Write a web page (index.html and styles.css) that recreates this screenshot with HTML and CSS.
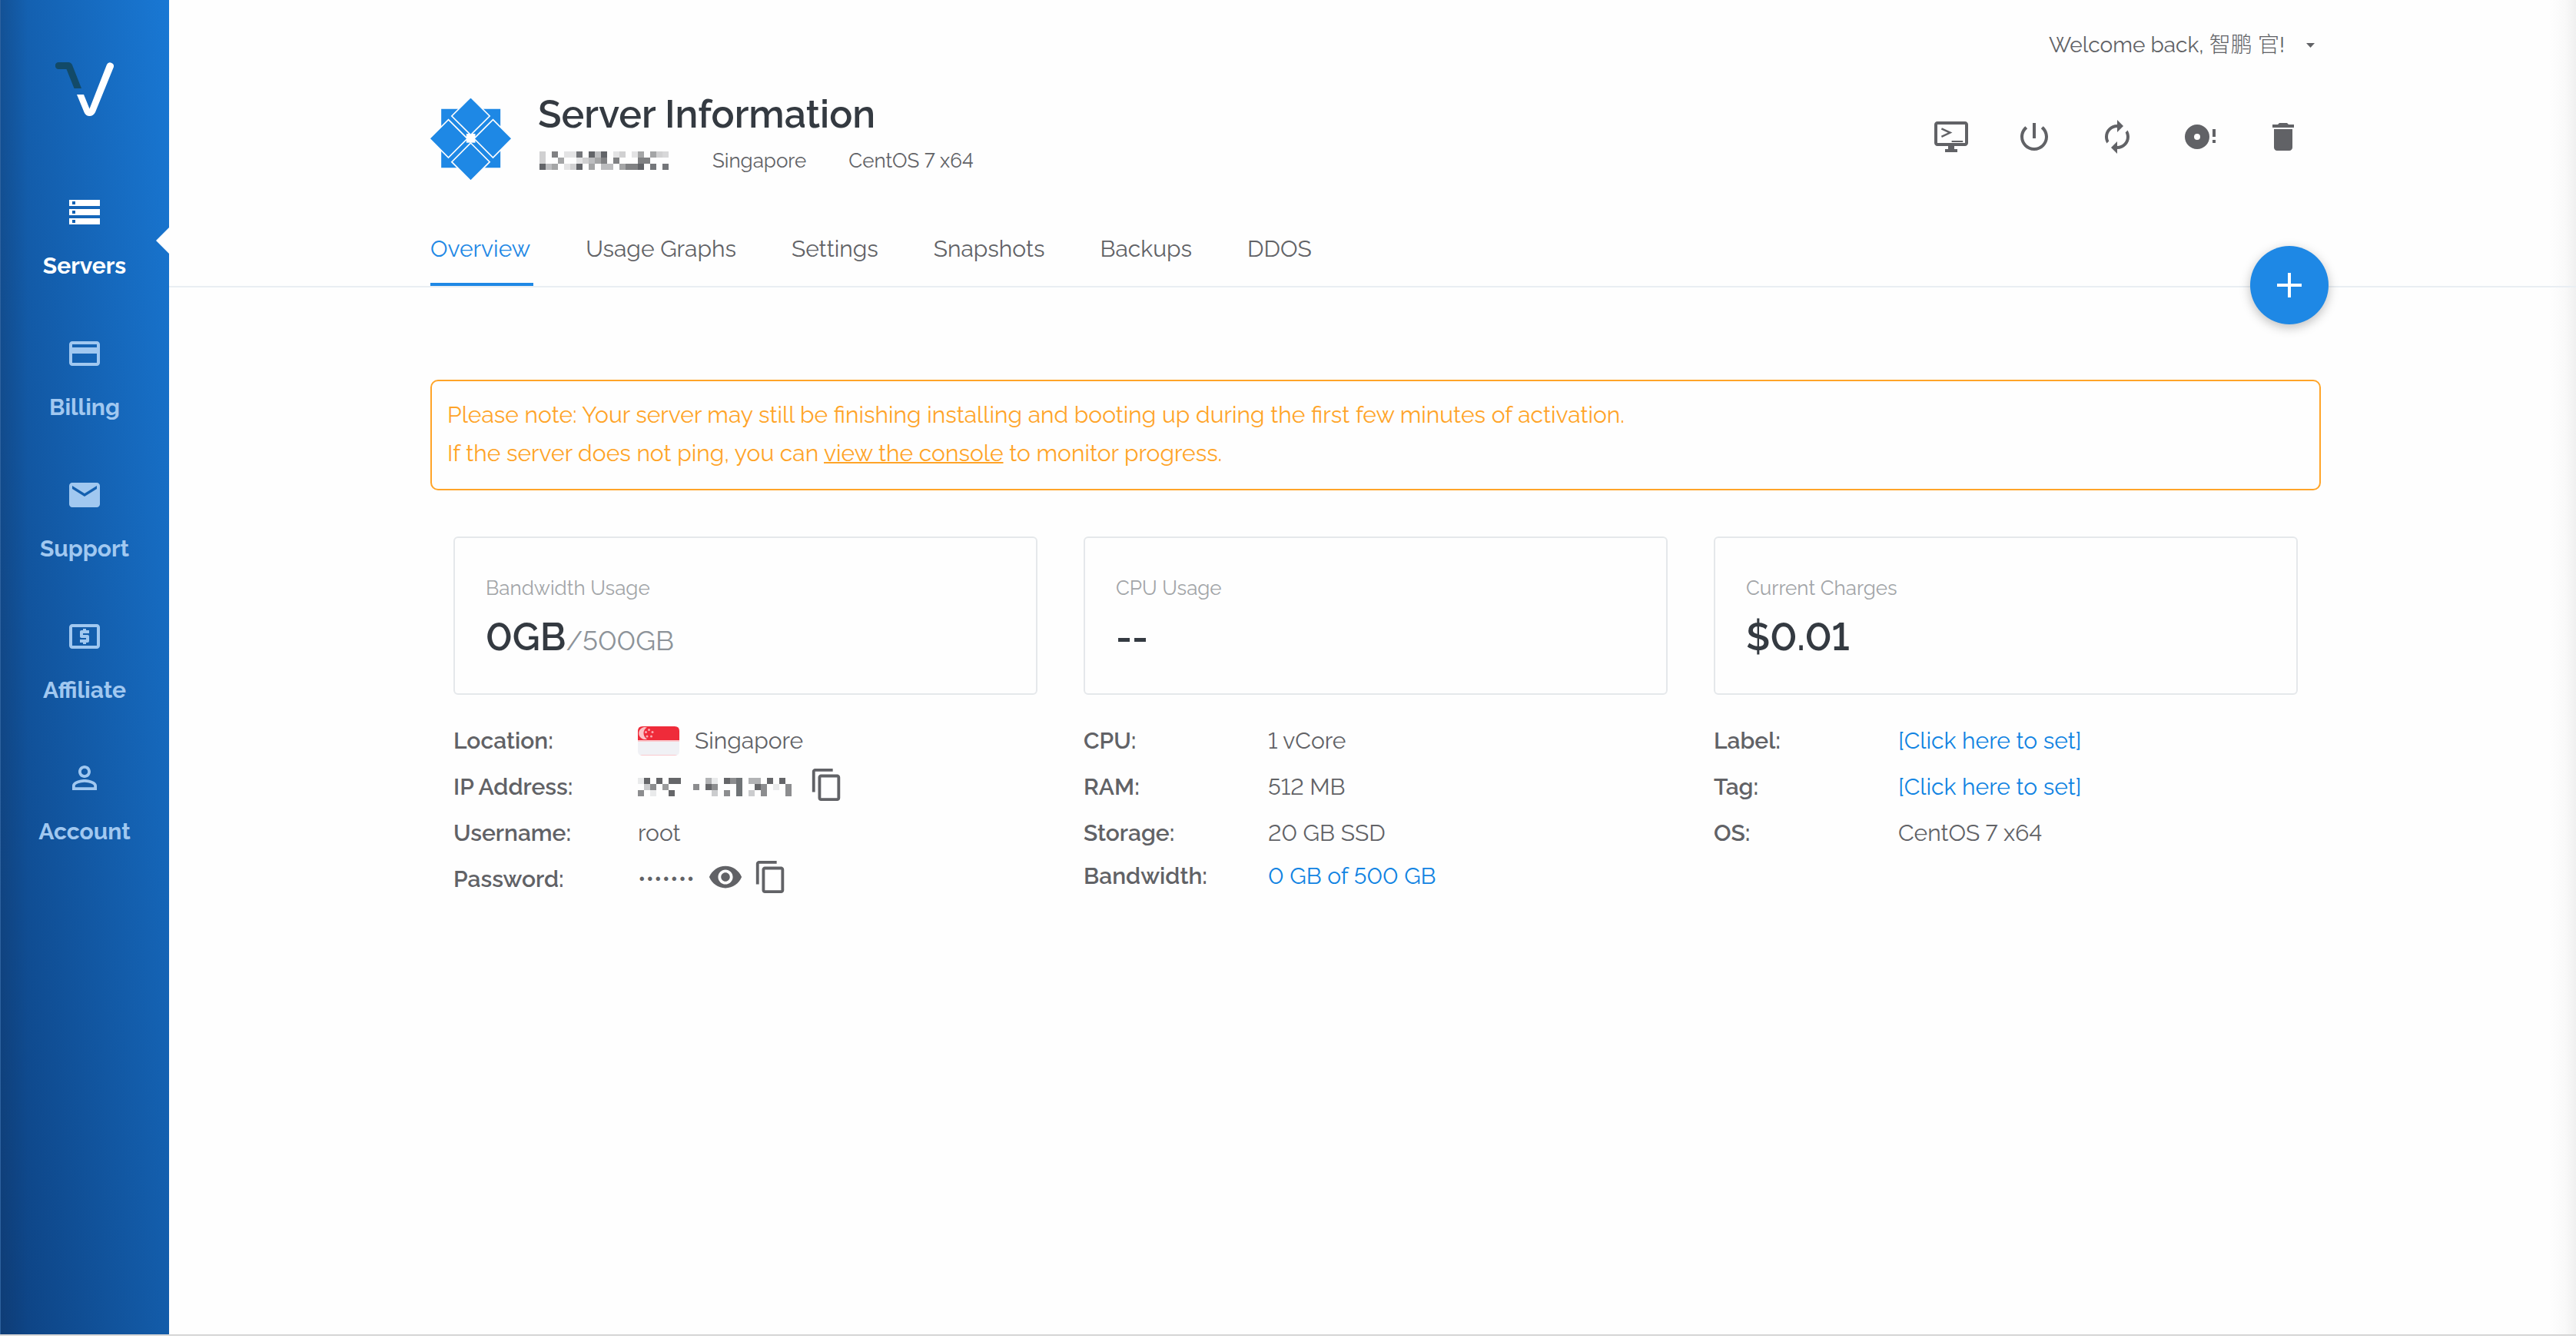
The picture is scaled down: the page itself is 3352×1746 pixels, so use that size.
FILE: index.html
```html
<!DOCTYPE html>
<html lang="en">
<head>
<meta charset="utf-8">
<meta name="viewport" content="width=device-width, initial-scale=1">
<title>Server Information</title>
<link rel="stylesheet" href="styles.css">
</head>
<body>
<div class="shell">
  <aside class="sidebar">
    <a class="brand" href="#" aria-label="Home">
      <svg width="76" height="70" viewBox="0 0 76 70" aria-hidden="true">
        <path fill="#124a68" d="M4.3 0H17Q20.500 0 22 3.500L34 34H24.500L14.500 9H4.300A4.500 4.500 0 0 1 4.300 0Z"/>
        <path fill="#fff" d="M28 42H37L44.500 60.500L67 3A4.800 4.800 0 0 1 76 6L52 65Q49.500 70 44.500 70Q39.500 70 37.500 65Z"/>
      </svg>
    </a>
    <nav class="nav" aria-label="Main">
      <a class="nav-item nav-item-active" href="#" aria-current="page">
        <svg class="icon" viewBox="0 0 24 24" aria-hidden="true"><path d="M2 20h20v-4H2v4zm2-3h2v2H4v-2zM2 4v4h20V4H2zm4 3H4V5h2v2zm-4 7h20v-4H2v4zm2-3h2v2H4v-2z"/></svg>
        <span>Servers</span>
      </a>
      <a class="nav-item" href="#">
        <svg class="icon" viewBox="0 0 24 24" aria-hidden="true"><path d="M20 4H4c-1.110 0-1.990.89-1.990 2L2 18c0 1.110.89 2 2 2h16c1.110 0 2-.89 2-2V6c0-1.110-.89-2-2-2zm0 14H4v-6h16v6zm0-10H4V6h16v2z"/></svg>
        <span>Billing</span>
      </a>
      <a class="nav-item" href="#">
        <svg class="icon" viewBox="0 0 24 24" aria-hidden="true"><path d="M20 4H4c-1.100 0-1.990.9-1.990 2L2 18c0 1.100.9 2 2 2h16c1.100 0 2-.9 2-2V6c0-1.100-.9-2-2-2zm0 4l-8 5-8-5V6l8 5 8-5v2z"/></svg>
        <span>Support</span>
      </a>
      <a class="nav-item" href="#">
        <svg class="icon" viewBox="0 0 24 24" aria-hidden="true"><path d="M11 17h2v-1h1c.55 0 1-.45 1-1v-3c0-.55-.45-1-1-1h-3v-1h4V8h-2V7h-2v1h-1c-.55 0-1 .45-1 1v3c0 .55.45 1 1 1h3v1H9v2h2v1zm9-13H4c-1.110 0-1.990.89-1.990 2L2 18c0 1.110.89 2 2 2h16c1.110 0 2-.89 2-2V6c0-1.110-.89-2-2-2zm0 14H4V6h16v12z"/></svg>
        <span>Affiliate</span>
      </a>
      <a class="nav-item" href="#">
        <svg class="icon" viewBox="0 0 24 24" aria-hidden="true"><path d="M12 5.900c1.160 0 2.100.94 2.100 2.100s-.94 2.100-2.100 2.100S9.900 9.160 9.900 8s.94-2.100 2.100-2.100m0 9c2.970 0 6.100 1.460 6.100 2.100v1.100H5.900V17c0-.64 3.130-2.100 6.100-2.100M12 4C9.790 4 8 5.790 8 8s1.790 4 4 4 4-1.790 4-4-1.790-4-4-4zm0 9c-2.670 0-8 1.340-8 4v3h16v-3c0-2.660-5.330-4-8-4z"/></svg>
        <span>Account</span>
      </a>
    </nav>
  </aside>

  <div class="page">
    <header class="header">
      <div class="container header-inner">
        <div class="topbar">
          <button class="user-menu" type="button">
            <span>Welcome back, <span class="user-name" lang="zh">智鹏 官</span>!</span>
            <svg width="11" height="6" viewBox="0 0 11 6" aria-hidden="true"><path d="M0 0H11L5.500 6Z"/></svg>
          </button>
        </div>

        <div class="title-row">
          <svg class="server-logo" width="105" height="106" viewBox="24 26 314 318" aria-hidden="true">
            <path d="M66 67H297V297H66Z"/>
            <path class="star" d="M164 164H199V199H164Z"/>
            <path class="tile" d="M181 21L255 95L181 169L107 95Z"/>
            <path class="tile" d="M94 109L168 183L94 257L20 183Z"/>
            <path class="tile" d="M268 109L342 183L268 257L194 183Z"/>
            <path class="tile" d="M181 200L255 274L181 348L107 274Z"/>
          </svg>
          <div class="title-block">
            <h1>Server Information</h1>
            <div class="meta">
              <svg class="redacted" width="172" height="24" viewBox="-2 0 172 24" role="img" aria-label="Hidden server address">
                <g transform="scale(8)">
                  <path fill="#d0d0d1" d="M0 0h1v2H0zM13 0h1v1h-1zM19 0h1v1h-1zM5 2h1v1H5zM7 1h1v1H7z"/>
                  <path fill="#e3e3e4" d="M4 0h2v1H4zM12 0h1v1h-1zM15 0h1v1h-1zM6 1h1v1H6zM4 2h1v1H4z"/>
                  <path fill="#808183" d="M2 0h1v1H2zM10 1h1v1h-1zM12 1h1v1h-1zM16 1h2v1h-2zM14 2h2v1h-2z"/>
                  <path fill="#626468" d="M8 0h1v1H8zM10 0h1v1h-1zM0 2h1v1H0zM6 2h1v1H6zM16 2h1v1h-1z"/>
                  <path fill="#74767a" d="M6 0h1v1H6zM18 2h1v1h-1zM20 2h1v1h-1z"/>
                  <path fill="#a4a5a6" d="M16 0h1v1h-1zM18 0h1v1h-1zM3 1h1v1H3zM9 1h1v1H9zM2 2h1v1H2zM8 2h1v1H8zM13 2h1v1h-1z"/>
                  <path fill="#bcbdbf" d="M9 0h1v1H9zM8 1h1v1H8zM1 2h1v1H1zM10 2h2v1h-2z"/>
                  <path fill="#d8d8d9" d="M20 0h1v1h-1z"/>
                </g>
              </svg>
              <span>Singapore</span>
              <span>CentOS 7 x64</span>
            </div>
          </div>
          <div class="actions">
            <button type="button" aria-label="View console"><svg class="icon" viewBox="0 0 24 24"><path d="M21 2H3c-1.100 0-2 .9-2 2v12c0 1.100.9 2 2 2h7v2H8v2h8v-2h-2v-2h7c1.100 0 2-.9 2-2V4c0-1.100-.9-2-2-2zm0 14H3V4h18v12z"/><path d="M12.300 14.500h7.300v1h-7.300z"/><path class="prompt" d="M5.700 6.700L11.300 9.300L5.700 11.900"/></svg></button>
            <button type="button" aria-label="Stop server"><svg class="icon" viewBox="0 0 24 24"><path d="M13 3h-2v10h2V3zm4.830 2.170l-1.420 1.420C17.990 7.860 19 9.810 19 12c0 3.870-3.130 7-7 7s-7-3.130-7-7c0-2.190 1.010-4.140 2.580-5.420L6.170 5.170C4.230 6.820 3 9.260 3 12c0 4.970 4.030 9 9 9s9-4.030 9-9c0-2.740-1.230-5.180-3.170-6.830z"/></svg></button>
            <button type="button" aria-label="Restart server"><svg class="icon" viewBox="0 0 24 24"><path d="M12 6v3l4-4-4-4v3c-4.420 0-8 3.580-8 8 0 1.570.46 3.030 1.240 4.260L6.700 14.800c-.45-.83-.7-1.790-.7-2.800 0-3.310 2.690-6 6-6zm6.760 1.740L17.300 9.200c.44.84.7 1.790.7 2.800 0 3.310-2.690 6-6 6v-3l-4 4 4 4v-3c4.420 0 8-3.580 8-8 0-1.570-.46-3.030-1.240-4.260z"/></svg></button>
            <button type="button" aria-label="Reinstall server"><svg class="icon" viewBox="0 0 24 24"><path d="M10 4a8 8 0 1 0 0 16a8 8 0 1 0 0-16zm0 6a2 2 0 1 1 0 4a2 2 0 1 1 0-4zM20 7h2v5h-2zM20 14h2v2h-2z"/></svg></button>
            <button type="button" aria-label="Destroy server"><svg class="icon" viewBox="0 0 24 24"><path d="M6 19c0 1.100.9 2 2 2h8c1.100 0 2-.9 2-2V7H6v12zM19 4h-3.500l-1-1h-5l-1 1H5v2h14V4z"/></svg></button>
          </div>
        </div>

        <nav class="tabs" aria-label="Server">
          <a class="tab tab-active" href="#" aria-current="page">Overview</a>
          <a class="tab" href="#">Usage Graphs</a>
          <a class="tab" href="#">Settings</a>
          <a class="tab" href="#">Snapshots</a>
          <a class="tab" href="#">Backups</a>
          <a class="tab" href="#">DDOS</a>
        </nav>

        <button class="fab" type="button" aria-label="Deploy new server">
          <svg width="32" height="32" viewBox="0 0 32 32" aria-hidden="true"><path d="M14 0h4v14h14v4H18v14h-4V18H0v-4h14z"/></svg>
        </button>
      </div>
    </header>

    <main class="main">
      <div class="container">
        <div class="notice" role="note">
          Please note: Your server may still be finishing installing and booting up during the first few minutes of activation.<br>
          If the server does not ping, you can <a href="#">view the console</a> to monitor progress.
        </div>

        <div class="columns">
          <section class="column">
            <div class="card">
              <h2>Bandwidth Usage</h2>
              <p class="value">0GB<span class="limit">/500GB</span></p>
            </div>
            <dl class="details">
              <div class="row">
                <dt>Location:</dt>
                <dd class="location">
                  <svg class="flag" width="54" height="38" viewBox="0 0 54 38" aria-hidden="true">
                    <path fill="#f0f1f5" d="M0 19H54V32Q54 38 48 38H6Q0 38 0 32Z"/>
                    <path fill="#fac9ce" d="M0 18H54V20H0ZM3 37H51Q50 38 48 38H6Q4 38 3 37Z"/>
                    <path fill="#ef2b3a" d="M6 0H48Q54 0 54 6V18H0V6Q0 0 6 0Z"/>
                    <path fill="#fbc4c8" d="M12 1.500A8 8 0 1 0 12 16.500A8.500 8.500 0 0 1 12 1.500Z"/>
                    <g fill="#f9aab1"><circle cx="14.500" cy="4.500" r="1.500"/><circle cx="19" cy="7.500" r="1.500"/><circle cx="17.500" cy="13" r="1.500"/><circle cx="12" cy="13" r="1.500"/><circle cx="10.500" cy="7.500" r="1.500"/></g>
                  </svg>
                  <span>Singapore</span>
                </dd>
              </div>
              <div class="row">
                <dt>IP Address:</dt>
                <dd class="address">
                  <svg class="redacted" width="200" height="24" viewBox="0 0 25 3" role="img" aria-label="Hidden IP address">
                    <path fill="#656669" d="M1 0h1v1H1zM3 0h1v1H3zM5 0h2v1H5zM14 0h1v1h-1zM21 0h1v1h-1zM23 0h1v1h-1zM11 1h1v1h-1zM19 1h1v1h-1zM5 2h1v1H5z"/>
                    <path fill="#6f7376" d="M16 0h1v3h-1z"/>
                    <path fill="#8c8d8f" d="M15 0h1v1h-1zM2 1h1v1H2zM9 1h1v1H9zM12 1h1v1h-1zM20 1h1v2h-1zM24 1h1v2h-1zM0 2h1v1H0zM14 2h1v1h-1z"/>
                    <path fill="#9a9b9c" d="M4 1h1v1H4z"/>
                    <path fill="#b2b3b5" d="M11 0h1v1h-1zM18 0h2v1h-2z"/>
                    <path fill="#cbccce" d="M1 1h1v1H1zM12 2h1v1h-1zM18 2h1v1h-1z"/>
                    <path fill="#e9eaeb" d="M0 0h1v1H0zM22 1h1v1h-1zM2 2h1v1H2zM12 0h1v1h-1z"/>
                  </svg>
                  <button class="tool" type="button" aria-label="Copy IP address"><svg class="tool-icon" viewBox="0 0 24 24"><path d="M16 1H4c-1.100 0-2 .9-2 2v14h2V3h12V1zm3 4H8c-1.100 0-2 .9-2 2v14c0 1.100.9 2 2 2h11c1.100 0 2-.9 2-2V7c0-1.100-.9-2-2-2zm0 16H8V7h11v14z"/></svg></button>
                </dd>
              </div>
              <div class="row">
                <dt>Username:</dt>
                <dd>root</dd>
              </div>
              <div class="row">
                <dt>Password:</dt>
                <dd class="password">
                  <span class="mask">•••••••</span>
                  <button class="tool" type="button" aria-label="Show password"><svg class="tool-icon" viewBox="0 0 24 24"><path d="M12 4.500C7 4.500 2.730 7.610 1 12c1.730 4.390 6 7.500 11 7.500s9.270-3.110 11-7.500c-1.730-4.390-6-7.500-11-7.500zM12 17c-2.760 0-5-2.240-5-5s2.240-5 5-5 5 2.240 5 5-2.240 5-5 5zm0-8c-1.660 0-3 1.340-3 3s1.340 3 3 3 3-1.340 3-3-1.340-3-3-3z"/></svg></button>
                  <button class="tool" type="button" aria-label="Copy password"><svg class="tool-icon" viewBox="0 0 24 24"><path d="M16 1H4c-1.100 0-2 .9-2 2v14h2V3h12V1zm3 4H8c-1.100 0-2 .9-2 2v14c0 1.100.9 2 2 2h11c1.100 0 2-.9 2-2V7c0-1.100-.9-2-2-2zm0 16H8V7h11v14z"/></svg></button>
                </dd>
              </div>
            </dl>
          </section>

          <section class="column">
            <div class="card">
              <h2>CPU Usage</h2>
              <p class="value">--</p>
            </div>
            <dl class="details">
              <div class="row"><dt>CPU:</dt><dd>1 vCore</dd></div>
              <div class="row"><dt>RAM:</dt><dd>512 MB</dd></div>
              <div class="row"><dt>Storage:</dt><dd>20 GB SSD</dd></div>
              <div class="row row-compact"><dt>Bandwidth:</dt><dd><a href="#">0 GB of 500 GB</a></dd></div>
            </dl>
          </section>

          <section class="column">
            <div class="card">
              <h2>Current Charges</h2>
              <p class="value">$0.01</p>
            </div>
            <dl class="details">
              <div class="row"><dt>Label:</dt><dd><a href="#">[Click here to set]</a></dd></div>
              <div class="row"><dt>Tag:</dt><dd><a href="#">[Click here to set]</a></dd></div>
              <div class="row"><dt>OS:</dt><dd>CentOS 7 x64</dd></div>
            </dl>
          </section>
        </div>
      </div>
    </main>
  </div>
</div>
</body>
</html>
```
FILE: styles.css
```css
:root {
  --blue: #1e88e5;
  --link: #1083e2;
  --text: #616266;
  --heading: #343a41;
  --rule: #e9eef3;
  --card-line: #e5e8eb;
  --orange: #ffa428;
}

* {
  box-sizing: border-box;
}

body {
  margin: 0;
  background: #fff;
  color: var(--text);
  font-family: Raleway, "Open Sans", "Noto Sans CJK SC", sans-serif;
  font-size: 30px;
  line-height: 60px;
  font-variant-numeric: lining-nums;
}

h1, h2, p, dl, dd {
  margin: 0;
}

a {
  color: var(--link);
  text-decoration: none;
}

button {
  padding: 0;
  border: 0;
  background: none;
  color: inherit;
  font: inherit;
  cursor: pointer;
}

svg {
  display: block;
  flex: none;
  fill: currentColor;
}

.shell {
  display: flex;
  min-height: calc(100vh - 8px);
  border-bottom: 2px solid #d5d5d5;
}

/* Sidebar */

.sidebar {
  flex: none;
  width: 220px;
  padding-top: 81px;
  background:
    linear-gradient(to right, rgba(20, 50, 90, .25), rgba(20, 50, 90, 0) 36px),
    linear-gradient(to bottom left, #1978d4, #0d407f);
  box-shadow: inset 1px 0 #2e629f;
}

.brand {
  display: flex;
  justify-content: center;
  margin-bottom: 70px;
}

.nav {
  display: flex;
  flex-direction: column;
}

.nav-item {
  position: relative;
  display: flex;
  flex-direction: column;
  align-items: center;
  gap: 26px;
  padding: 31px 0 39px;
  color: #a1c8f0;
  font-weight: 700;
  line-height: 40px;
}

.nav-item-active {
  color: #fff;
}

.nav-item-active::after {
  content: "";
  position: absolute;
  top: 50%;
  right: 0;
  width: 17px;
  height: 34px;
  margin-top: -17px;
  background: #fefefe;
  clip-path: polygon(0 50%, 100% 0, 100% 100%);
}

.icon {
  width: 48px;
  height: 48px;
}

/* Page frame */

.page {
  flex: 1;
  min-width: 0;
  background: linear-gradient(to left, #f0f0f0, #f9f9f9 14px, #fefefe 34px);
}

.header,
.main {
  padding-left: 8px;
}

.header {
  border-bottom: 2px solid var(--rule);
}

.container {
  max-width: 2460px;
  margin: 0 auto;
}

.header-inner {
  position: relative;
}

.topbar {
  display: flex;
  justify-content: flex-end;
  padding: 35px 8px 0 0;
}

.user-menu {
  display: flex;
  align-items: center;
  gap: 28px;
  font-size: 28px;
  line-height: 48px;
}

.user-name {
  font-weight: 300;
}

.title-row {
  display: flex;
  gap: 35px;
  margin-top: 36px;
}

.server-logo {
  margin-top: 9px;
  fill: var(--blue);
}

.server-logo .star {
  fill: #fefefe;
}

.server-logo .tile {
  stroke: #fefefe;
  stroke-width: 5;
}

.title-block {
  flex: 1;
}

h1 {
  color: var(--heading);
  font-size: 50px;
  font-weight: 600;
  line-height: 60px;
}

.meta {
  display: flex;
  align-items: center;
  gap: 55px;
  margin-top: 12px;
  font-size: 26px;
  line-height: 36px;
}

.redacted {
  shape-rendering: crispEdges;
}

.actions {
  display: flex;
  align-items: flex-start;
  gap: 60px;
  padding: 35px 25px 0 0;
}

.prompt {
  fill: none;
  stroke: currentColor;
  stroke-width: 1.2;
}

.tabs {
  display: flex;
  gap: 68px;
  margin-top: 66px;
}

.tab {
  padding: 0 4px 20px 0;
  border-bottom: 4px solid transparent;
  color: var(--text);
  line-height: 48px;
}

.tab-active {
  border-color: var(--blue);
  color: var(--blue);
}

.fab {
  position: absolute;
  right: -10px;
  bottom: -50px;
  display: flex;
  align-items: center;
  justify-content: center;
  width: 102px;
  height: 102px;
  border-radius: 50%;
  background: var(--blue);
  box-shadow: 0 4px 14px rgba(0, 0, 0, .26);
  color: #fff;
}

/* Overview */

.notice {
  margin-top: 120px;
  padding: 19px 20px 21px;
  border: 2px solid var(--orange);
  border-radius: 10px;
  color: var(--orange);
  line-height: 50px;
}

.notice a {
  color: inherit;
  text-decoration: underline;
  text-decoration-thickness: 2px;
}

.columns {
  display: grid;
  grid-template-columns: repeat(3, 1fr);
  gap: 60px;
  margin-top: 60px;
  padding: 0 30px;
}

.card {
  padding: 47px 40px 43px;
  border: 2px solid var(--card-line);
  border-radius: 6px;
}

h2 {
  color: #a2a5a8;
  font-size: 26px;
  font-weight: 400;
  line-height: 36px;
}

.value {
  margin-top: 16px;
  color: var(--heading);
  font-size: 50px;
  font-weight: 600;
  line-height: 60px;
}

.limit {
  color: #8d9399;
  font-size: 36px;
  font-weight: 400;
  line-height: 36px;
}

.details {
  margin-top: 30px;
}

.row {
  display: grid;
  grid-template-columns: 240px 1fr;
  height: 60px;
}

.row-compact {
  line-height: 52px;
}

dt {
  font-weight: 600;
}

dd {
  display: flex;
  align-items: center;
}

.row-compact dd {
  align-items: flex-start;
}

.location {
  gap: 20px;
}

.address {
  gap: 23px;
}

.password {
  gap: 13px;
}

.mask {
  padding-right: 4px;
}

.tool {
  margin-bottom: 6px;
}

.tool-icon {
  width: 46px;
  height: 46px;
}
```
